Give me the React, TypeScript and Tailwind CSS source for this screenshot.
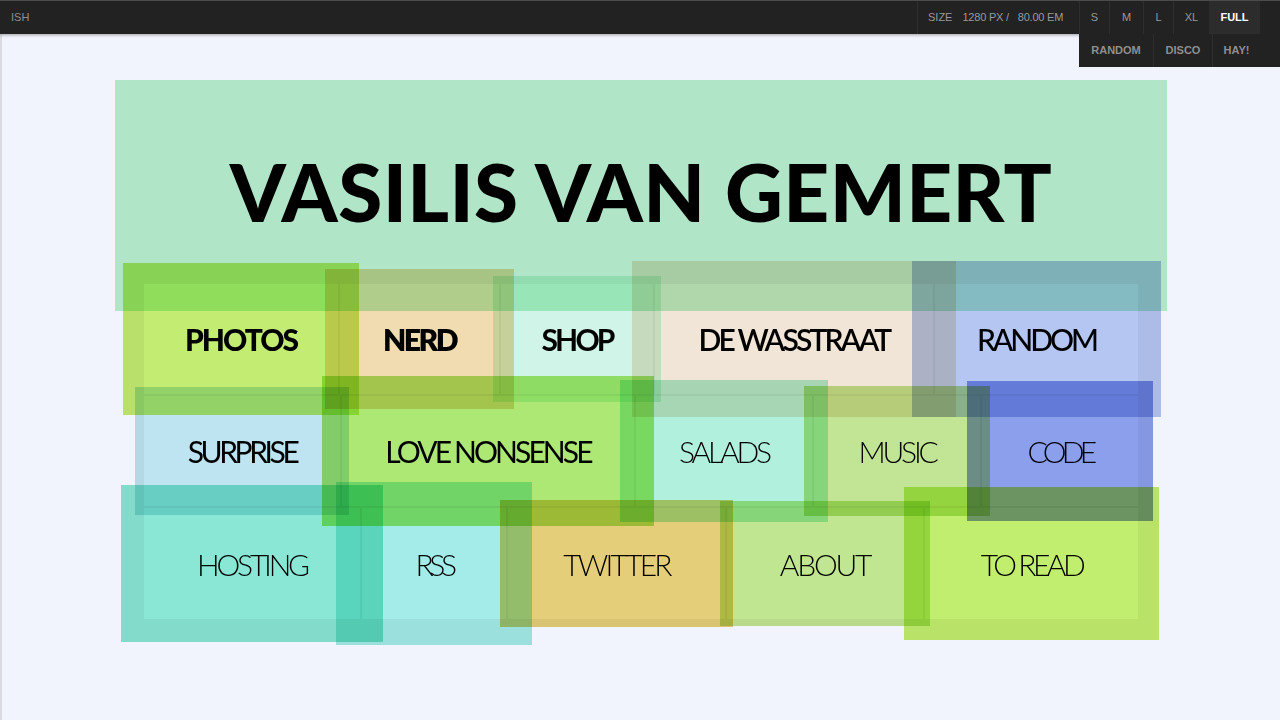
import React from "react";

type Cell = {
  label: string;
  cls: string;
};

// Each link: a coloured block with a fat band around it; everything multiplies
// with whatever lies beneath, so overlaps go darker.
const ROWS: { h: string; cells: Cell[] }[] = [
  {
    h: "h-[112px]",
    cells: [
      { label: "PHOTOS", cls: "w-[196px] bg-[#cff773] shadow-[0_0_0_20px_#c5eb6d] font-black tracking-[-2px]" },
      { label: "NERD", cls: "w-[161px] bg-[#ffe5b2] shadow-[0_0_0_14px_#f2daa9] font-extrabold tracking-[-2.5px]" },
      { label: "SHOP", cls: "w-[154px] bg-[#ddffeb] shadow-[0_0_0_7px_#d2f5df] font-bold tracking-[-2.8px]" },
      { label: "DE WASSTRAAT", cls: "w-[280px] bg-[#fff0db] shadow-[0_0_0_22px_#f2e4d0] font-semibold tracking-[-2.8px]" },
      { label: "RANDOM", cls: "w-[205px] bg-[#c0cff6] shadow-[0_0_0_22px_#b6c5ea] font-medium tracking-[-3px]" },
    ],
  },
  {
    h: "h-[112px]",
    cells: [
      { label: "SURPRISE", cls: "w-[198px] bg-[#c9eff4] shadow-[0_0_0_8px_#bfe3e8] font-normal tracking-[-3.4px]" },
      { label: "LOVE NONSENSE", cls: "w-[294px] bg-[#b7f275] shadow-[0_0_0_19px_#aee66f] font-normal tracking-[-2.9px]" },
      { label: "SALADS", cls: "w-[178px] bg-[#bafbdf] shadow-[0_0_0_15px_#b1eed4] font-light tracking-[-3.2px]" },
      { label: "MUSIC", cls: "w-[168px] bg-[#ccef97] shadow-[0_0_0_9px_#c2e38f] font-light tracking-[-3.2px]" },
      { label: "CODE", cls: "w-[158px] bg-[#94a6ef] shadow-[0_0_0_14px_#8d9ee3] font-light tracking-[-4.7px]" },
    ],
  },
  {
    h: "h-[113px]",
    cells: [
      { label: "HOSTING", cls: "w-[218px] bg-[#92f2d9] shadow-[0_0_0_22px_#8be6ce] font-light tracking-[-3.2px]" },
      { label: "RSS", cls: "w-[146px] bg-[#aef7ed] shadow-[0_0_0_25px_#a5ebe1] font-light tracking-[-4.4px]" },
      { label: "TWITTER", cls: "w-[219px] bg-[#f2d87b] shadow-[0_0_0_7px_#e6cd75] font-light tracking-[-2.8px]" },
      { label: "ABOUT", cls: "w-[198px] bg-[#ccf193] shadow-[0_0_0_6px_#c2e58c] font-light tracking-[-2.2px]" },
      { label: "TO READ", cls: "w-[215px] bg-[#cef970] shadow-[0_0_0_20px_#c4ed6a] font-light tracking-[-3.5px]" },
    ],
  },
];

function TopBar() {
  return (
    <div className="relative z-10 h-[34px] shrink-0 bg-[#222] border-t border-[#4b4b4b] shadow-[0_1px_3px_rgba(0,0,0,0.35)] flex items-stretch text-[11px] uppercase text-[#999] font-['Liberation_Sans',Arial,sans-serif]">
      <div className="pl-[11px] flex items-center text-[#8e8e8e]">ish</div>
      <div className="flex-1" />
      <div className="flex items-center border-l border-[#2e2e2e] pl-[10px] w-[162px]">
        <span>Size</span>
        <span className="ml-[10px] tracking-[-0.02em]">1280 px /</span>
        <span className="ml-[9px] tracking-[-0.02em]">80.00 em</span>
      </div>
      {["S", "M", "L", "XL"].map((s, i) => (
        <div
          key={s}
          className={
            "flex items-center justify-center border-l border-[#2e2e2e] " +
            ["w-[30px]", "w-[34px]", "w-[30px]", "w-[36px]"][i]
          }
        >
          {s}
        </div>
      ))}
      <div className="w-[51px] flex items-center justify-center bg-[#2c2c2c] text-white font-bold">Full</div>
      <div className="w-[20px]" />
      <div className="absolute right-0 top-[33px] w-[201px] h-[33px] bg-[#222] flex items-stretch font-bold text-[#8f8f8f]">
        <div className="w-[74px] flex items-center justify-center">Random</div>
        <div className="w-[59px] flex items-center justify-center border-l border-[#2e2e2e]">Disco</div>
        <div className="w-[48px] flex items-center justify-center border-l border-[#2e2e2e]">Hay!</div>
      </div>
    </div>
  );
}

export default function App() {
  return (
    <div className="w-full h-[720px] bg-[#f1f4fc] flex flex-col overflow-hidden font-['Lato',sans-serif]">
      <TopBar />
      <div className="flex flex-1">
        <div className="w-[2px] bg-[#d9dbe0]" />
        <main className="flex-1 isolate bg-[#f1f4fc] pt-[46px]">
          <h1 className="mx-auto w-[1052px] h-[231px] pb-[10px] bg-[#baf0cb] mix-blend-multiply flex items-center justify-center text-[80px] leading-none font-black tracking-[0.4px] text-black">
            VASILIS VAN GEMERT
          </h1>
          <nav className="mx-auto w-[996px] -mt-[28px] flex flex-col">
            {ROWS.map((row, r) => (
              <div key={r} className={"flex " + row.h}>
                {row.cells.map((c) => (
                  <a
                    key={c.label}
                    href="#"
                    className={
                      "h-full flex items-center justify-center border border-transparent bg-clip-padding mix-blend-multiply text-[30px] leading-none text-black " +
                      c.cls
                    }
                  >
                    {c.label}
                  </a>
                ))}
              </div>
            ))}
          </nav>
        </main>
      </div>
    </div>
  );
}
